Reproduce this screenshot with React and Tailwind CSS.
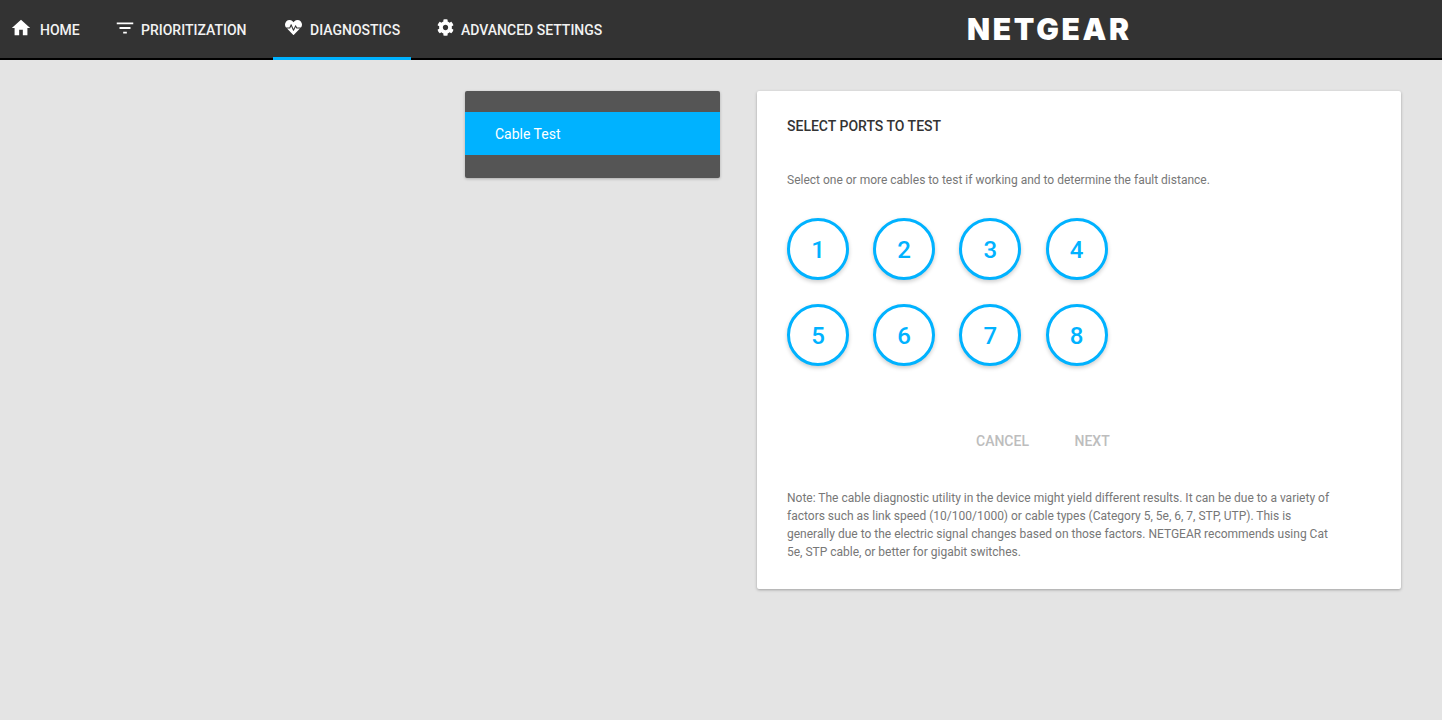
import { MdHome, MdFilterList } from "react-icons/md"
import { FaHeartbeat, FaCog } from "react-icons/fa"

const tabs = [
  { label: "HOME", Icon: MdHome, iconClass: "text-[22px]", width: "w-[92px]", gap: "gap-[8px]", pad: "pl-[10px]" },
  { label: "PRIORITIZATION", Icon: MdFilterList, iconClass: "text-[22px]", width: "w-[155px]", gap: "gap-[5px]", pad: "pl-[9px]" },
  { label: "DIAGNOSTICS", Icon: FaHeartbeat, iconClass: "text-[17px]", width: "w-[138px]", gap: "gap-[8px]", pad: "pl-[12px]", active: true },
  { label: "ADVANCED SETTINGS", Icon: FaCog, iconClass: "text-[17px]", width: "w-[190px]", gap: "gap-[7px]", pad: "pl-[13px]" },
]

const ports = [1, 2, 3, 4, 5, 6, 7, 8]

export default function App() {
  return (
    <div className="min-h-[720px] bg-[#e4e4e4] font-['Roboto',sans-serif]">
      <header className="flex h-[60px] items-stretch border-b-2 border-black bg-[#333333]">
        <nav className="flex gap-[13px]">
          {tabs.map(({ label, Icon, iconClass, width, gap, pad, active }) => (
            <div key={label} className={`relative flex items-center ${width} ${gap} ${pad}`}>
              <Icon className={`${iconClass} -mt-[3px] shrink-0 text-white`} />
              <span className="mt-[2px] text-sm font-medium text-[#f2f2f2]">{label}</span>
              {active && <div className="absolute -bottom-[2px] left-0 right-0 h-[3px] bg-[#00b2ff]" />}
            </div>
          ))}
        </nav>
        <div className="ml-[353px] flex items-center font-['Inter',sans-serif] text-[30px] font-black leading-none tracking-[2.7px] text-white">
          NETGEAR
        </div>
      </header>

      <main className="flex items-start gap-[37px] pl-[465px] pt-[31px]">
        <div className="w-[255px] rounded-[2px] bg-[#555555] pb-[23px] pt-[21px] shadow-[0_1px_3px_rgba(0,0,0,0.25)]">
          <div className="flex h-[43px] items-center bg-[#00b2ff] pl-[30px] text-sm text-white">Cable Test</div>
        </div>

        <section className="h-[498px] w-[644px] rounded-[2px] bg-white px-[30px] pt-[27px] shadow-[0_1px_3px_rgba(0,0,0,0.3)]">
          <h2 className="text-sm font-medium leading-[16px] text-[#333333]">SELECT PORTS TO TEST</h2>
          <p className="mt-[37px] text-xs leading-[18px] text-[#777777]">
            Select one or more cables to test if working and to determine the fault distance.
          </p>
          <div className="mt-[29px] grid grid-cols-[repeat(4,62px)] gap-x-[24.2px] gap-y-[24px]">
            {ports.map((port) => (
              <div
                key={port}
                className="flex h-[62px] w-[62px] items-center justify-center rounded-full border-[3px] border-[#00b2ff] bg-white pt-px text-2xl font-medium text-[#00b2ff] shadow-[0_2px_4px_rgba(0,0,0,0.2)]"
              >
                {port}
              </div>
            ))}
          </div>
          <div className="mt-[66px] flex h-[18px] items-center text-sm font-medium text-[#bdbdbd]">
            <span className="ml-[189px]">CANCEL</span>
            <span className="ml-[45.5px]">NEXT</span>
          </div>
          <p className="mt-[39px] w-[550px] text-xs leading-[18px] text-[#777777]">
            Note: The cable diagnostic utility in the device might yield different results. It can be due to a variety of
            factors such as link speed (10/100/1000) or cable types (Category 5, 5e, 6, 7, STP, UTP). This is generally
            due to the electric signal changes based on those factors. NETGEAR recommends using Cat 5e, STP cable, or
            better for gigabit switches.
          </p>
        </section>
      </main>
    </div>
  )
}
